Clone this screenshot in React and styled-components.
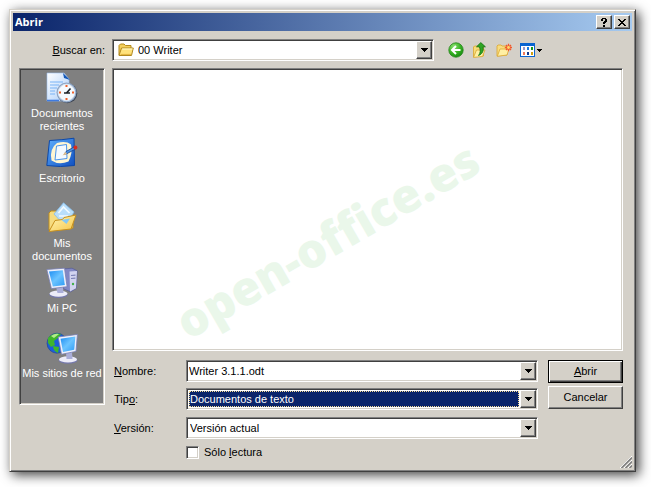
import React,{useState} from 'react';
import styled,{createGlobalStyle,css} from 'styled-components'

const GlobalStyle = createGlobalStyle`
  *{
    box-sizing:border-box;
  }
  body{
    margin:0;
    background:#fff;
    color:#000;
  }
  body, button, input, select{
    font-family:"Liberation Sans", Arial, sans-serif;
    font-size:11px;
    line-height:13px;
  }
`

const raised = css`
  border:1px solid;
  border-color:#fff #404040 #404040 #fff;
  box-shadow:inset -1px -1px #808080;
  background:#d4d0c8;
`

const sunken = css`
  border:1px solid;
  border-color:#808080 #fff #fff #808080;
  box-shadow:inset 1px 1px #404040, inset -1px -1px #d4d0c8;
`

const Dialog = styled.div`
  position:relative;
  margin:9px 15px 15px 9px;
  padding:3px;
  border:1px solid;
  border-color:#d4d0c8 #404040 #404040 #d4d0c8;
  background:#d4d0c8;
  box-shadow:inset 1px 1px #fff, inset -1px -1px #808080, 3px 3px 11px rgba(0,0,0,0.75);
`

const TitleBar = styled.div`
  display:flex;
  align-items:center;
  gap:2px;
  height:18px;
  padding:0 2px;
  background:linear-gradient(to right, #0a246a, #a6caf0);
`

const Title = styled.h1`
  flex:1;
  margin:0;
  color:#fff;
  font-family:"Open Sans", sans-serif;
  font-size:11px;
  line-height:18px;
  font-weight:bold;
`

const TitleButton = styled.button`
  ${raised}
  display:flex;
  align-items:center;
  justify-content:center;
  width:16px;
  height:14px;
  padding:0;
`

const Content = styled.form`
  padding:8px 9px 9px 6px;
`

const LookRow = styled.div`
  display:flex;
  align-items:center;
  margin-bottom:7px;
`

const LookLabel = styled.label`
  width:86px;
  margin-right:7px;
  text-align:right;
`

const Tools = styled.div`
  display:flex;
  align-items:center;
  gap:8px;
  width:189px;
  padding-left:14px;
`

const ToolButton = styled.button`
  display:flex;
  align-items:center;
  gap:2px;
  padding:0;
  border:0;
  background:none;
`

const Combo = styled.div`
  ${sunken}
  display:flex;
  align-items:center;
  flex:1;
  min-width:0;
  height:22px;
  padding:1px;
  background:#fff;
`

const comboText = css`
  flex:1;
  min-width:0;
  height:18px;
  margin:0;
  border:0;
  border-radius:0;
  outline:none;
  appearance:none;
`

const Select = styled.select`
  ${comboText}
  padding:0 2px;
  color:${p => p.$active ? '#fff' : '#000'};
  background:${p => p.$active ? '#0a246a' : '#fff'};
  ${p => p.$active && css`
    height:16px;
    margin:0 1px;
    padding:0;
    border:1px dotted #f5db95;
  `}
`

const Input = styled.input`
  ${comboText}
  padding:0 1px;
  background:#fff;
`

const ArrowBox = styled.span`
  ${raised}
  display:flex;
  align-items:center;
  justify-content:center;
  width:16px;
  height:18px;
  pointer-events:none;
`

const FolderSlot = styled.span`
  display:flex;
  padding:0 2px 0 4px;
`

const Main = styled.div`
  display:flex;
  align-items:flex-start;
  gap:7px;
`

const Places = styled.nav`
  ${sunken}
  display:flex;
  flex-direction:column;
  width:86px;
  padding:3px 1px 7px;
  background:#808080;
`

const Place = styled.button`
  display:flex;
  flex-direction:column;
  align-items:center;
  gap:3px;
  height:65px;
  padding:0;
  border:0;
  background:none;
  color:#fff;
  white-space:pre-line;
`

const Right = styled.div`
  flex:1;
  min-width:0;
`

const FileList = styled.div`
  ${sunken}
  position:relative;
  min-height:283px;
  margin-bottom:9px;
  background:#fff;
`

const Watermark = styled.span`
  position:absolute;
  left:42%;
  top:61%;
  transform:translate(-50%,-50%) rotate(-30deg);
  color:#eaf7ea;
  font-family:"Open Sans", sans-serif;
  font-size:47px;
  line-height:68px;
  font-weight:800;
  white-space:nowrap;
`

const Bottom = styled.div`
  display:flex;
  gap:10px;
`

const Fields = styled.div`
  display:flex;
  flex-direction:column;
  gap:7px;
  flex:1;
  min-width:0;
`

const FieldPair = styled.div`
  display:flex;
  flex-direction:column;
  gap:6px;
`

const Field = styled.div`
  display:flex;
  align-items:center;
`

const FieldLabel = styled.label`
  width:74px;
  padding-left:2px;
`

const CheckLabel = styled.label`
  display:flex;
  align-items:center;
  gap:5px;
  padding-left:74px;
`

const Checkbox = styled.input`
  ${sunken}
  appearance:none;
  width:13px;
  height:13px;
  margin:0;
  background:#fff;
  &:checked{
    background:#404040;
  }
`

const Actions = styled.div`
  display:flex;
  flex-direction:column;
  gap:3px;
  width:75px;
`

const Button = styled.button`
  ${raised}
  height:23px;
  padding:0;
  ${p => p.$main && css`
    border-color:#000;
    box-shadow:inset 1px 1px #fff, inset -1px -1px #404040, inset -2px -2px #808080;
  `}
`

const Grip = styled.svg`
  position:absolute;
  right:3px;
  bottom:3px;
`

const Arrow = () => (
  <svg width="7" height="4" viewBox="0 0 7 4" shapeRendering="crispEdges">
    <path d="M0 0h7v1h-1v1h-1v1h-1v1h-1v-1h-1v-1h-1v-1h-1z"/>
  </svg>
)

const FolderIcon = () => (
  <svg width="16" height="16" viewBox="0 0 16 16">
    <path d="M1 13V3.5L2.5 2H6l1.5 1.5H13V7" fill="#f3cf5c" stroke="#b58a1c"/>
    <path d="M1 13.5L3.5 6H15.3L13.5 13.5z" fill="#ffe27c" stroke="#b08820"/>
    <path d="M4.2 7H14.4" stroke="#fffbd0"/>
    <path d="M2.6 12.4h10.4" stroke="#e3b23c"/>
  </svg>
)

const BackIcon = () => (
  <svg width="16" height="16" viewBox="0 0 16 16">
    <defs>
      <radialGradient id="back" cx="0.35" cy="0.25" r="0.8">
        <stop offset="0" stopColor="#8be070"/>
        <stop offset="0.6" stopColor="#35b020"/>
        <stop offset="1" stopColor="#168a10"/>
      </radialGradient>
    </defs>
    <circle cx="8" cy="8" r="7.2" fill="url(#back)" stroke="#24851a" strokeWidth="0.8"/>
    <path d="M8 4L4 8l4 4M4.5 8H12.5" fill="none" stroke="#fff" strokeWidth="2"/>
  </svg>
)

const UpIcon = () => (
  <svg width="16" height="16" viewBox="0 0 16 16">
    <path d="M1.5 15V5l1-1h3l1 1h5v9z" fill="#f8dc78" stroke="#dba62c" strokeWidth="0.8"/>
    <path d="M1.5 15.4L4.5 8H13l-2.5 6.5z" fill="#fff0a4" stroke="#d8a634" strokeWidth="0.8"/>
    <path d="M4.5 4.8L8.8 0.6L13.4 4.8H11C11.8 9 10.5 12 6.5 13.5C8.6 11 8.6 8 7.4 4.8z" fill="#2fa524" stroke="#137312" strokeWidth="0.8"/>
  </svg>
)

const NewIcon = () => (
  <svg width="16" height="16" viewBox="0 0 16 16">
    <path d="M1 14V4l1-1h3l1 1h5v9z" fill="#f8dc80" stroke="#dba62c" strokeWidth="0.8"/>
    <path d="M1.3 14.3L4 7h9l-2 6z" fill="#fff0a4" stroke="#dba834" strokeWidth="0.8"/>
    <path d="M12.5 1.8v7.4M8.8 5.5h7.2M10 3l5 5M15 3l-5 5" stroke="#f25a2c" strokeWidth="1.3"/>
    <circle cx="12.5" cy="5.5" r="1.4" fill="#ffd86a"/>
  </svg>
)

const ViewIcon = () => (
  <svg width="15" height="14" viewBox="0 0 15 14" shapeRendering="crispEdges">
    <rect width="15" height="14" fill="#0a64d0"/>
    <rect x="1" y="3" width="13" height="10" fill="#fff"/>
    <rect x="3" y="4" width="2" height="3" fill="#9d97c4"/>
    <rect x="7" y="4" width="2" height="3" fill="#1b7ae0"/>
    <rect x="11" y="4" width="2" height="3" fill="#12961c"/>
    <rect x="3" y="9" width="2" height="3" fill="#f07c5c"/>
    <rect x="7" y="9" width="2" height="3" fill="#123a8c"/>
    <rect x="11" y="9" width="2" height="3" fill="#d0a010"/>
  </svg>
)

const SmallArrow = () => (
  <svg width="5" height="3" viewBox="0 0 5 3" shapeRendering="crispEdges">
    <path d="M0 0h5v1h-1v1h-1v1h-1v-1h-1v-1h-1z"/>
  </svg>
)

const HelpIcon = () => (
  <svg width="6" height="9" viewBox="0 0 6 9" shapeRendering="crispEdges">
    <path d="M1 0h4v1h1v3h-1v1h-1v1h-2v-2h1v-1h1v-2h-2v2h-2v-2h1zM2 7h2v2h-2z"/>
  </svg>
)

const CloseIcon = () => (
  <svg width="8" height="7" viewBox="0 0 8 7" shapeRendering="crispEdges">
    <path d="M0 0h2v1h1v1h2v-1h1v-1h2v1h-1v1h-1v1h-1v1h1v1h1v1h1v1h-2v-1h-1v-1h-2v1h-1v1h-2v-1h1v-1h1v-1h1v-1h-1v-1h-1v-1h-1z"/>
  </svg>
)

const RecentIcon = () => (
  <svg width="32" height="32" viewBox="0 0 32 32">
    <defs>
      <linearGradient id="sheet" x1="0" y1="0" x2="1" y2="1">
        <stop offset="0" stopColor="#fff"/>
        <stop offset="1" stopColor="#a9cdfa"/>
      </linearGradient>
    </defs>
    <path d="M1 1H18l5 6V29H1z" fill="url(#sheet)" stroke="#9cc0f0" strokeWidth="0.6"/>
    <path d="M17 1l7 7-6-2z" fill="#1458b8"/>
    <path d="M4 10h13M4 13h9M4 16h7M4 19h5M4 22h5" stroke="#79b3f5"/>
    <path d="M1 28.5h12" stroke="#3f7be0" strokeWidth="1.6"/>
    <circle cx="21.3" cy="21.3" r="10" fill="#3e4654"/>
    <circle cx="20.5" cy="20.5" r="10" fill="#8fa6c6"/>
    <circle cx="20.5" cy="20.5" r="8.3" fill="#f5faff" stroke="#dce8f4"/>
    <path d="M20.5 13v2M20.5 26v2M13 20.5h2M26 20.5h2" stroke="#f0622c" strokeWidth="2"/>
    <path d="M24.5 16.5L20.5 21M18 21h6" stroke="#1b2026" strokeWidth="1.6"/>
  </svg>
)

const DesktopIcon = () => (
  <svg width="32" height="32" viewBox="0 0 32 32">
    <defs>
      <linearGradient id="desk" x1="0" y1="0" x2="1" y2="1">
        <stop offset="0" stopColor="#5fb0ff"/>
        <stop offset="1" stopColor="#1050c0"/>
      </linearGradient>
    </defs>
    <path d="M3.5 3.5Q16 3 28 1.2L28.5 28.5Q14 30.5 0.8 28.5z" fill="url(#desk)" stroke="#0d48a8"/>
    <path d="M11 6Q20 3.5 25 7.5Q27 16 22.5 24.5Q13 28.5 5.5 23.5Q3 12 11 6z" fill="#fff6d2"/>
    <path d="M10.5 9l10-1.5 0.5 14-12 1.5z" fill="#f4faff" stroke="#4a94ea"/>
    <path d="M18 17.5l2-3 8-4.5 1.6 2-8.6 4.6z" fill="#4a94ea" stroke="#163f84" strokeWidth="0.8"/>
    <path d="M16.5 18.5l2.8-3.4 1.7 2z" fill="#f2c98c"/>
    <circle cx="29.4" cy="10.5" r="2" fill="#d92d1c"/>
  </svg>
)

const DocsIcon = () => (
  <svg width="32" height="32" viewBox="0 0 32 32">
    <defs>
      <linearGradient id="docs" x1="0" y1="0" x2="1" y2="1">
        <stop offset="0" stopColor="#fff6b8"/>
        <stop offset="1" stopColor="#f6c648"/>
      </linearGradient>
    </defs>
    <path d="M3 28V11l2-2h5l3 3h14v14z" fill="#f6dc80" stroke="#c08e1c"/>
    <path d="M8 12L17.5 0.8L28 10l-9 14z" fill="#b9defa" stroke="#84bcec" strokeWidth="0.8"/>
    <path d="M12.5 11l5-6 6 6M13 14h9" stroke="#f2faff" strokeWidth="1.6" fill="none"/>
    <path d="M3 29.5L9 18.5l7.5-1L18 15.5 30 13l-5 14z" fill="url(#docs)" stroke="#c8901c"/>
    <path d="M15.5 18l8.5-1.5-3.5 5.5z" fill="#84c8f4"/>
  </svg>
)

const ComputerIcon = () => (
  <svg width="32" height="32" viewBox="0 0 32 32">
    <defs>
      <linearGradient id="screen" x1="0" y1="0" x2="1" y2="1">
        <stop offset="0" stopColor="#1c8cf2"/>
        <stop offset="0.5" stopColor="#6cc4ff"/>
        <stop offset="1" stopColor="#2c9af6"/>
      </linearGradient>
    </defs>
    <path d="M17 2l9-0.8 5.2 2.6-1 17.6-5.6 3.4-7-3z" fill="#8288c4" stroke="#565c98" strokeWidth="0.7"/>
    <path d="M23.5 4.5l7.5-0.6-1 17.3-6 3.2z" fill="#d2d4f0"/>
    <path d="M25 8.5l4.5-0.4M25 11.5l4.4-0.4" stroke="#7a80b6" strokeWidth="1.2"/>
    <circle cx="27" cy="17" r="1.2" fill="#42b04a"/>
    <ellipse cx="12.5" cy="27.6" rx="9.3" ry="3.4" fill="#7478ac"/>
    <ellipse cx="12.5" cy="26.6" rx="9" ry="3.1" fill="#ececf8"/>
    <path d="M10 20h7l0.5 6h-6z" fill="#aaaed8"/>
    <path d="M0.8 2.5L18.5 1.2l2.6 18.5L5.4 21.6z" fill="#eef0fc" stroke="#7880b4" strokeWidth="0.8"/>
    <path d="M3 4.5l13.8-1.2 2 14.7L6.8 19.4z" fill="url(#screen)"/>
  </svg>
)

const NetworkIcon = () => (
  <svg width="32" height="32" viewBox="0 0 32 32">
    <circle cx="11" cy="11.2" r="10" fill="#1c5ed8" stroke="#123f94" strokeWidth="0.6"/>
    <path d="M2 6Q7 0 15 2L12 6 8 9l1 4-4 2-3-4zM7 14l6 1-1 6q-5-2-5-7z" fill="#3fb52c"/>
    <path d="M5 4q4-3 8-2l-5 4z" fill="#b3ec8c"/>
    <ellipse cx="22" cy="28.4" rx="9.3" ry="3.3" fill="#7478ac"/>
    <ellipse cx="22" cy="27.4" rx="9" ry="3.1" fill="#ececf8"/>
    <path d="M20 20h6l0.5 7h-6z" fill="#aaaed8"/>
    <path d="M12.2 5L31.4 2.4L30 19.4L15.5 22.3z" fill="#eef0fc" stroke="#7880b4" strokeWidth="0.8"/>
    <path d="M14.5 6.7L29.4 4.6L28.2 17.7L17 20z" fill="url(#screen)"/>
  </svg>
)

const places = [
  {name:'Documentos\nrecientes',icon:<RecentIcon/>},
  {name:'Escritorio',icon:<DesktopIcon/>},
  {name:'Mis\ndocumentos',icon:<DocsIcon/>},
  {name:'Mi PC',icon:<ComputerIcon/>},
  {name:'Mis sitios de red',icon:<NetworkIcon/>}
]

const App =()=>{
  const [fileName,setFileName] = useState('Writer 3.1.1.odt')
  const [readOnly,setReadOnly] = useState(false)

  return(
    <>
      <GlobalStyle/>
      <Dialog>
        <TitleBar>
          <Title>Abrir</Title>
          <TitleButton type="button" aria-label="Ayuda"><HelpIcon/></TitleButton>
          <TitleButton type="button" aria-label="Cerrar"><CloseIcon/></TitleButton>
        </TitleBar>
        <Content onSubmit={(e)=> e.preventDefault()}>
          <LookRow>
            <LookLabel htmlFor="folder"><u>B</u>uscar en:</LookLabel>
            <Combo>
              <FolderSlot><FolderIcon/></FolderSlot>
              <Select id="folder"><option>00 Writer</option></Select>
              <ArrowBox><Arrow/></ArrowBox>
            </Combo>
            <Tools>
              <ToolButton type="button" aria-label="Atrás"><BackIcon/></ToolButton>
              <ToolButton type="button" aria-label="Subir un nivel"><UpIcon/></ToolButton>
              <ToolButton type="button" aria-label="Nueva carpeta"><NewIcon/></ToolButton>
              <ToolButton type="button" aria-label="Vistas"><ViewIcon/><SmallArrow/></ToolButton>
            </Tools>
          </LookRow>
          <Main>
            <Places>
              {places.map(place => (
                <Place type="button" key={place.name}>
                  {place.icon}
                  <span>{place.name}</span>
                </Place>
              ))}
            </Places>
            <Right>
              <FileList>
                <Watermark>open-office.es</Watermark>
              </FileList>
              <Bottom>
                <Fields>
                  <FieldPair>
                    <Field>
                      <FieldLabel htmlFor="name"><u>N</u>ombre:</FieldLabel>
                      <Combo>
                        <Input id="name" type="text" value={fileName} onChange={(e)=>setFileName(e.target.value)}/>
                        <ArrowBox><Arrow/></ArrowBox>
                      </Combo>
                    </Field>
                    <Field>
                      <FieldLabel htmlFor="type">Tip<u>o</u>:</FieldLabel>
                      <Combo>
                        <Select id="type" $active><option>Documentos de texto</option></Select>
                        <ArrowBox><Arrow/></ArrowBox>
                      </Combo>
                    </Field>
                  </FieldPair>
                  <Field>
                    <FieldLabel htmlFor="version"><u>V</u>ersión:</FieldLabel>
                    <Combo>
                      <Select id="version"><option>Versión actual</option></Select>
                      <ArrowBox><Arrow/></ArrowBox>
                    </Combo>
                  </Field>
                  <CheckLabel>
                    <Checkbox type="checkbox" checked={readOnly} onChange={(e)=>setReadOnly(e.target.checked)}/>
                    <span>Sólo <u>l</u>ectura</span>
                  </CheckLabel>
                </Fields>
                <Actions>
                  <Button type="submit" $main><u>A</u>brir</Button>
                  <Button type="button">Cancelar</Button>
                </Actions>
              </Bottom>
            </Right>
          </Main>
        </Content>
        <Grip width="12" height="12" viewBox="0 0 12 12">
          <path d="M0 12L12 0M4 12L12 4M8 12L12 8" stroke="#fff"/>
          <path d="M1.5 12L12 1.5M5.5 12L12 5.5M9.5 12L12 9.5" stroke="#808080" strokeWidth="1.6"/>
        </Grip>
      </Dialog>
    </>
  )
}

export default App
